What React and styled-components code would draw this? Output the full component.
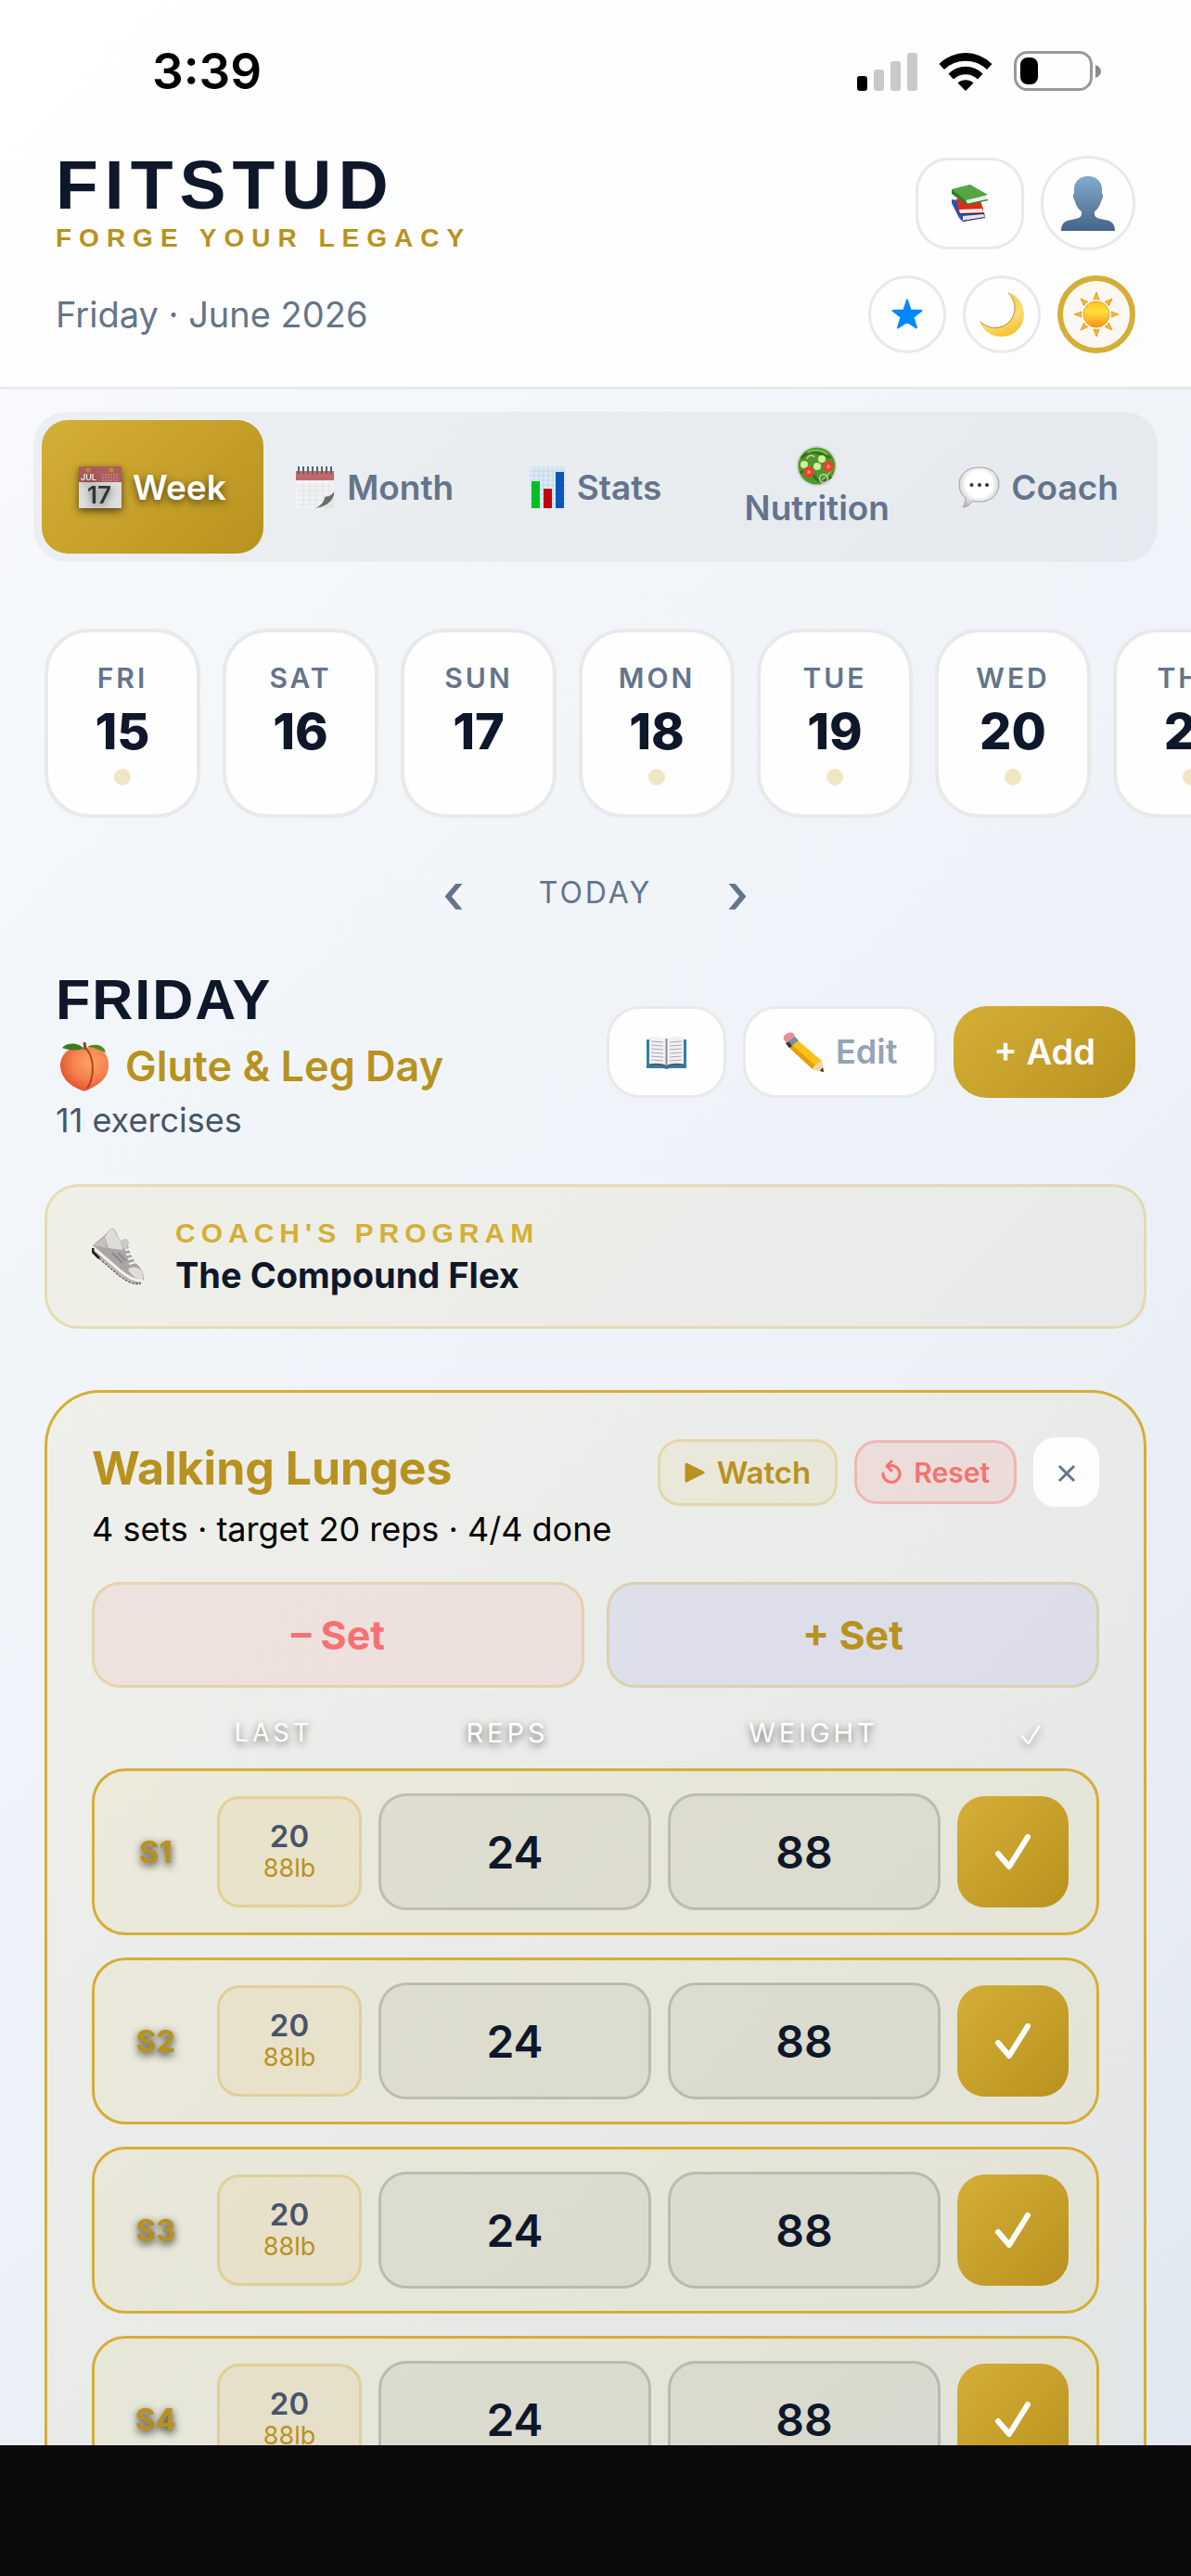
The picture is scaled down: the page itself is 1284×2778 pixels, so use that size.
import React, { useState } from "react";
import styled, { createGlobalStyle, css } from "styled-components";

const gold = "#d4af37";
const darkGold = "#b8921e";
const ink = "#0f172a";
const slate = "#64748b";
const line = "#e9e9e9";
const goldFill = `linear-gradient(135deg, ${gold}, ${darkGold})`;
const sans = `Inter, "Liberation Sans", sans-serif`;
const display = `"Liberation Sans", Arial, sans-serif`;

const GlobalStyle = createGlobalStyle`
  *, *::before, *::after { box-sizing: border-box; }
  body { margin: 0; background: #0b0b0b; }
  button, input { font: inherit; margin: 0; padding: 0; border: 0; color: inherit; background: none; }
  button { cursor: pointer; white-space: nowrap; }
  h1, h2, h3, p { margin: 0; }
  svg { display: block; flex: none; }
`;

/* ---------- shell ---------- */

const Screen = styled.div`
  display: flex;
  flex-direction: column;
  height: 100vh;
  overflow: hidden;
  font-family: ${sans};
  color: ${ink};
  background: linear-gradient(135deg, #fafbff 0%, #f3f7fa 25%, #eff3f9 50%, #e1e7f0 100%);
`;

const Content = styled.main`
  flex: 1;
  min-height: 0;
  overflow: hidden;
`;

const BottomBar = styled.footer`
  flex: none;
  height: 141px;
  background: #0b0b0b;
`;

const TopArea = styled.header`
  background: rgba(255, 255, 255, 0.82);
  border-bottom: 3px solid ${line};
`;

const StatusBar = styled.div`
  display: flex;
  justify-content: space-between;
  align-items: center;
  height: 141px;
  padding: 12px 96px 0 164px;
`;

const Clock = styled.time`
  font-size: 53px;
  font-weight: 600;
  line-height: 60px;
  color: #000;
`;

const StatusIcons = styled.div`
  display: flex;
  align-items: center;
  gap: 23px;
`;

const HeaderGrid = styled.div`
  display: flex;
  flex-direction: column;
  gap: 27px;
  padding: 27px 60px 36px;
`;

const HeaderRow = styled.div`
  display: flex;
  align-items: center;
  justify-content: space-between;
  height: ${(p) => p.$height}px;
`;

const Cluster = styled.div`
  display: flex;
  align-items: center;
  gap: 18px;
`;

const Brand = styled.div`
  display: flex;
  flex-direction: column;
  gap: 10px;
  font-family: ${display};
  font-weight: 700;
`;

const Logo = styled.h1`
  font-size: 75px;
  line-height: 66px;
  letter-spacing: 7px;
`;

const Tagline = styled.p`
  font-size: 28px;
  line-height: 30px;
  letter-spacing: 8px;
  color: ${darkGold};
`;

const DateText = styled.p`
  font-size: 38px;
  line-height: 48px;
  color: ${slate};
`;

const PillButton = styled.button`
  display: flex;
  align-items: center;
  justify-content: center;
  gap: 12px;
  height: 99px;
  padding: 0 ${(p) => p.$pad || 40}px;
  border: 3px solid ${line};
  border-radius: 36px;
  background: #fefefe;
  font-size: 36px;
  font-weight: 600;
  line-height: 45px;
  color: #94a3b8;
  ${(p) =>
    p.$primary &&
    css`
      border: 0;
      background: ${goldFill};
      font-size: 38px;
      color: #fff;
    `}
`;

const RoundButton = styled.button`
  display: flex;
  align-items: center;
  justify-content: center;
  width: ${(p) => p.$size}px;
  height: ${(p) => p.$size}px;
  border: 3px solid ${line};
  border-radius: 50%;
  background: #fefefe;
  ${(p) =>
    p.$active &&
    css`
      border: 6px solid ${gold};
      background: #fbf8f1;
    `}
`;

/* ---------- tabs ---------- */

const Tabs = styled.nav`
  display: flex;
  margin: 24px 36px 0;
  padding: 9px;
  border-radius: 36px;
  background: rgba(0, 0, 0, 0.04);
`;

const Tab = styled.button`
  flex: 1 1 0;
  min-width: 0;
  display: flex;
  flex-direction: ${(p) => (p.$stacked ? "column" : "row")};
  align-items: center;
  justify-content: center;
  gap: ${(p) => (p.$stacked ? 0 : 12)}px;
  min-height: 144px;
  border-radius: 28px;
  font-size: 37px;
  font-weight: 600;
  line-height: 45px;
  color: ${slate};
  ${(p) =>
    p.$active &&
    css`
      background: ${goldFill};
      color: #fff;
      text-shadow: 0 3px 8px rgba(0, 0, 0, 0.6);
      svg {
        filter: drop-shadow(0 3px 4px rgba(0, 0, 0, 0.6));
      }
    `}
`;

/* ---------- day strip ---------- */

const DayStrip = styled.div`
  display: flex;
  gap: 24px;
  margin-top: 72px;
  padding: 0 48px;
  overflow: hidden;
`;

const DayCard = styled.button`
  flex: none;
  display: flex;
  flex-direction: column;
  align-items: center;
  gap: 10px;
  width: 168px;
  padding: 31px 0;
  border: 4px solid ${line};
  border-radius: 48px;
  background: #fefefe;
`;

const DayName = styled.span`
  font-size: 30px;
  font-weight: 600;
  line-height: 36px;
  letter-spacing: 3px;
  color: ${slate};
`;

const DayNumber = styled.span`
  font-size: 54px;
  font-weight: 800;
  line-height: 60px;
`;

const DayDot = styled.span`
  width: 18px;
  height: 18px;
  border-radius: 50%;
  background: ${(p) => (p.$on ? "#f1e6c2" : "transparent")};
`;

const WeekNav = styled.div`
  display: flex;
  align-items: center;
  justify-content: center;
  gap: 56px;
  height: 102px;
  margin-top: 30px;
  color: ${slate};
`;

const NavArrow = styled.button`
  width: 72px;
  font-size: 60px;
  font-weight: 500;
  line-height: 72px;
`;

const TodayButton = styled.button`
  font-size: 32px;
  line-height: 48px;
  letter-spacing: 3px;
`;

/* ---------- day header ---------- */

const DayHeader = styled.section`
  display: flex;
  align-items: center;
  justify-content: space-between;
  margin-top: 27px;
  padding: 0 60px;
`;

const DayTitle = styled.h2`
  font-family: ${display};
  font-size: 61px;
  font-weight: 700;
  line-height: 75px;
  letter-spacing: 2px;
`;

const Focus = styled.p`
  display: flex;
  align-items: center;
  gap: 13px;
  margin-top: 4px;
  font-size: 45px;
  font-weight: 600;
  line-height: 60px;
  color: ${darkGold};
`;

const ExerciseCount = styled.p`
  margin-top: 8px;
  font-size: 36px;
  line-height: 40px;
  color: #475569;
`;

/* ---------- program card ---------- */

const ProgramCard = styled.section`
  display: flex;
  align-items: center;
  gap: 33px;
  height: 156px;
  margin: 49px 48px 0;
  padding: 0 48px;
  border: 3px solid rgba(212, 175, 55, 0.3);
  border-radius: 36px;
  background: linear-gradient(135deg, rgba(225, 205, 130, 0.14), rgba(212, 200, 150, 0.14));
`;

const ProgramLabel = styled.p`
  font-family: ${display};
  font-size: 30px;
  font-weight: 700;
  line-height: 40px;
  letter-spacing: 6px;
  color: ${gold};
`;

const ProgramName = styled.p`
  font-size: 38px;
  font-weight: 700;
  line-height: 50px;
`;

/* ---------- exercise card ---------- */

const ExerciseCard = styled.section`
  margin: 66px 48px 0;
  padding: 48px;
  border: 3px solid ${gold};
  border-radius: 60px;
  background: linear-gradient(135deg, rgba(226, 208, 140, 0.14), rgba(222, 214, 170, 0.16));
`;

const ExerciseTop = styled.div`
  display: flex;
  align-items: flex-start;
  justify-content: space-between;
  height: 126px;
`;

const ExerciseName = styled.h3`
  font-size: 50px;
  font-weight: 700;
  line-height: 66px;
  color: ${darkGold};
`;

const ExerciseMeta = styled.p`
  margin-top: 6px;
  font-size: 36px;
  line-height: 54px;
  white-space: nowrap;
  color: #000;
`;

const SmallButton = styled.button`
  display: flex;
  align-items: center;
  gap: 13px;
  height: ${(p) => p.$height}px;
  padding: 0 26px;
  border: 3px solid;
  border-radius: 24px;
  font-size: ${(p) => p.$text}px;
  font-weight: 600;
  ${(p) =>
    p.$tone === "red"
      ? css`
          border-color: rgba(248, 113, 113, 0.35);
          background: rgba(248, 113, 113, 0.12);
          color: #f87171;
        `
      : css`
          border-color: rgba(212, 175, 55, 0.3);
          background: rgba(212, 175, 55, 0.08);
          color: ${darkGold};
        `}
`;

const CloseButton = styled.button`
  display: flex;
  align-items: center;
  justify-content: center;
  width: 71px;
  height: 75px;
  border-radius: 24px;
  background: #fdfdfd;
  color: ${slate};
`;

const SetButtons = styled.div`
  display: grid;
  grid-template-columns: 1fr 1fr;
  gap: 24px;
  margin-top: 30px;
`;

const SetButton = styled.button`
  height: 114px;
  border: 3px solid rgba(212, 175, 55, 0.3);
  border-radius: 30px;
  background: ${(p) => (p.$tone === "red" ? "rgba(248, 113, 113, 0.1)" : "rgba(99, 102, 241, 0.09)")};
  font-size: 43px;
  font-weight: 700;
  color: ${(p) => (p.$tone === "red" ? "#f87171" : darkGold)};
`;

const ColumnHeads = styled.div`
  display: grid;
  grid-template-columns: 90px 156px 1fr 1fr 120px;
  gap: 18px;
  margin: 30px 0 19px;
  padding: 0 14px 0 10px;
  font-size: 29px;
  line-height: 38px;
  letter-spacing: 4px;
  text-align: center;
  color: #fff;
  text-shadow: 0 3px 9px rgba(0, 0, 0, 0.6);
  svg {
    margin: 9px auto 0;
    filter: drop-shadow(0 3px 4px rgba(0, 0, 0, 0.4));
  }
`;

const HeadSmall = styled.span`
  font-size: 27px;
`;

const SetList = styled.ul`
  display: flex;
  flex-direction: column;
  gap: 24px;
  margin: 0;
  padding: 0;
  list-style: none;
`;

const SetRow = styled.li`
  display: grid;
  grid-template-columns: 84px 156px 1fr 1fr 120px;
  align-items: center;
  gap: 18px;
  height: 180px;
  padding: 0 30px;
  border: 3px solid ${gold};
  border-radius: 36px;
  background: rgba(212, 195, 55, 0.08);
`;

const SetLabel = styled.span`
  padding-right: 12px;
  font-size: 33px;
  font-weight: 700;
  line-height: 40px;
  text-align: center;
  color: ${darkGold};
  text-shadow: 0 3px 9px rgba(0, 0, 0, 0.8);
`;

const LastBox = styled.div`
  display: flex;
  flex-direction: column;
  align-items: center;
  justify-content: center;
  height: 120px;
  border: 3px solid rgba(212, 175, 55, 0.35);
  border-radius: 24px;
  background: rgba(232, 190, 110, 0.14);
`;

const LastReps = styled.strong`
  font-size: 33px;
  font-weight: 600;
  line-height: 36px;
  color: #475569;
`;

const LastWeight = styled.span`
  font-size: 27px;
  line-height: 34px;
  color: ${darkGold};
`;

const NumberInput = styled.input`
  width: 100%;
  height: 126px;
  border: 3px solid rgba(0, 0, 0, 0.15);
  border-radius: 30px;
  background: rgba(0, 0, 0, 0.045);
  font-size: 48px;
  font-weight: 600;
  text-align: center;
  color: ${ink};
`;

const DoneButton = styled.button`
  display: flex;
  align-items: center;
  justify-content: center;
  height: 120px;
  border-radius: 30px;
  background: ${(p) => (p.$done ? goldFill : "rgba(0, 0, 0, 0.06)")};
`;

/* ---------- drawings ---------- */

const SignalIcon = () => (
  <svg width="65" height="42" viewBox="0 0 65 42">
    <rect x="0" y="26" width="11" height="16" rx="3" fill="#000" />
    <rect x="18" y="19" width="11" height="23" rx="3" fill="#c9c9c9" />
    <rect x="36" y="10" width="11" height="32" rx="3" fill="#c9c9c9" />
    <rect x="54" y="1" width="11" height="41" rx="3" fill="#c9c9c9" />
  </svg>
);

const WifiIcon = () => (
  <svg width="58" height="42" viewBox="0 0 58 42">
    <path d="M0.500 13A40 40 0 0 1 57.500 13L52 19A33 33 0 0 0 6 19Z" fill="#000" />
    <path d="M10.500 23.500A26 26 0 0 1 47.500 23.500L42 29.500A19 19 0 0 0 16 29.500Z" fill="#000" />
    <path d="M20.500 33.500A13 13 0 0 1 37.500 33.500L29 42Z" fill="#000" />
  </svg>
);

const BatteryIcon = () => (
  <svg width="95" height="44" viewBox="0 0 95 44">
    <rect x="1.500" y="1.500" width="82" height="40" rx="13" fill="none" stroke="#999" strokeWidth="3" />
    <rect x="7" y="7" width="19" height="29" rx="8" fill="#000" />
    <path d="M88 15C92 16.500 94 19 94 22S92 27.500 88 29Z" fill="#8b8b8b" />
  </svg>
);

const BooksIcon = () => (
  <svg width="39" height="40" viewBox="0 0 39 40">
    <path d="M0 16L6 17L9 29L35 30L36 35L12 40L8 36L0 20Z" fill="#2c4fae" />
    <path d="M12 34L34 32L36 35L12 39Z" fill="#e4e4ea" />
    <path d="M5 15L31 18L34 26L33 31L8 31Z" fill="#e02a1a" />
    <path d="M8 27L33 26V30L9 31Z" fill="#ecebea" />
    <path d="M0 5L20 0L39 11L15 18Z" fill="#55a544" />
    <path d="M15 17L37 12V17L17 21Z" fill="#e9eceb" />
    <path d="M0 5L15 17L17 21L15 21L0 10Z" fill="#2f7d2a" />
    <path d="M16 21.500L39 16.500" stroke="#2f8d2a" strokeWidth="1.500" />
    <path d="M8 31.500H34M12 39.500L36 35.500" stroke="#3a2a4a" strokeWidth="1" />
  </svg>
);

const PersonIcon = () => (
  <svg width="60" height="60" viewBox="0 0 60 60">
    <defs>
      <linearGradient id="person" x1="0" y1="0" x2="0" y2="1">
        <stop offset="0" stopColor="#82abcd" />
        <stop offset="1" stopColor="#446489" />
      </linearGradient>
    </defs>
    <path
      fill="url(#person)"
      d="M30 1C39 1 45 7 45 15V20C47 20 46 25 44.500 27C43 33 40 37 37 39V42C37 46 43 47 48 48C56 49 59 53 59 60H1C1 53 4 49 12 48C17 47 23 46 23 42V39C20 37 17 33 15.500 27C14 25 13 20 15 20V15C15 7 21 1 30 1Z"
    />
  </svg>
);

const StarIcon = () => (
  <svg width="36" height="36" viewBox="0 0 36 36">
    <path
      d="M18 2.500L21.500 13.500L33.500 14L24.500 21L28 32.500L18 26L8 32.500L11.500 21L2.500 14L14.500 13.500Z"
      fill="#0088ff"
      stroke="#0088ff"
      strokeWidth="2"
      strokeLinejoin="round"
    />
  </svg>
);

const MoonIcon = () => (
  <svg width="48" height="48" viewBox="0 0 48 48">
    <defs>
      <linearGradient id="moon" x1="0.3" y1="0" x2="0.7" y2="1">
        <stop offset="0" stopColor="#f3cb4a" />
        <stop offset="0.6" stopColor="#f9dd74" />
        <stop offset="1" stopColor="#f6be24" />
      </linearGradient>
    </defs>
    <path d="M31 0C42 4 48 14 48 24A24 24 0 0 1 24 48C12 48 3 41 0 31C5 36 11 38.500 17 38.500C29 38 38 29 38 17C38 10 35 4 31 0Z" fill="url(#moon)" />
    <path d="M31 1C35 5 38 10 38 17C38 29 29 38 17 38.500C11 38.500 5 36 1 32" fill="none" stroke="#b98a3a" strokeWidth="1" />
  </svg>
);

const SunIcon = () => (
  <svg width="48" height="48" viewBox="0 0 48 48">
    <defs>
      <linearGradient id="sun" x1="0" y1="0" x2="0" y2="1">
        <stop offset="0" stopColor="#fbc21f" />
        <stop offset="0.4" stopColor="#ffe03c" />
        <stop offset="1" stopColor="#f3920f" />
      </linearGradient>
    </defs>
    {[0, 45, 90, 135, 180, 225, 270, 315].map((a) => (
      <path key={a} d="M24 0L27 8Q24 6.500 21 8Z" fill="#fbb823" stroke="#e08f2c" strokeWidth="0.8" transform={`rotate(${a} 24 24)`} />
    ))}
    <circle cx="24" cy="24" r="14" fill="url(#sun)" stroke="#f0a22a" strokeWidth="1" />
  </svg>
);

const CalendarIcon = () => (
  <svg width="46" height="45" viewBox="0 0 46 45">
    <rect width="46" height="45" rx="1" fill="#dedede" />
    <rect width="46" height="17" fill="#ad5c5f" />
    <circle cx="10" cy="4" r="2.500" fill="#b7902c" />
    <circle cx="35" cy="4" r="2.500" fill="#b7902c" />
    <text x="2" y="15" fontFamily="Inter, sans-serif" fontSize="9" fill="#eee">JUL</text>
    <path d="M25 9H43M25 12H43M25 15H43" stroke="#cf9a9c" strokeWidth="1" strokeDasharray="2 1" />
    <text x="22" y="40" textAnchor="middle" fontFamily="Inter, sans-serif" fontSize="26" fill="#333">17</text>
  </svg>
);

const NotepadIcon = () => (
  <svg width="45" height="45" viewBox="0 0 45 45">
    <path d="M2 9H43V45H2Z" fill="#f1f2f3" />
    <rect x="2" y="5" width="41" height="10" fill="#c0686c" />
    <path d="M4 21H41M4 26H41M4 31H38M4 36H34M4 41H26M10 16V44M17 16V44M24 16V42M31 16V40M38 16V33" stroke="#e1e3e6" strokeWidth="1" />
    <path d="M5 0V8M10 0V8M15 0V8M20 0V8M25 0V8M30 0V8M35 0V8M40 0V8" stroke="#56656a" strokeWidth="2" />
    <path d="M43 27C40 33 35 32 33 33C33 38 28 44 21 45C33 44 40 40 43 31Z" fill="#6c6c6c" />
    <path d="M43 32V45H25C34 43 40 39 43 32Z" fill="#e4e5e5" />
  </svg>
);

const ChartIcon = () => (
  <svg width="39" height="45" viewBox="0 0 39 45">
    <rect width="39" height="45" fill="#dcebf7" />
    <path d="M0 5H39M0 10H39M0 15H39M0 20H39M0 25H39M0 30H39M0 35H39M0 40H39M5 0V45M10 0V45M15 0V45M20 0V45M25 0V45M30 0V45M35 0V45" stroke="#c3d6e6" strokeWidth="1" />
    <rect x="2" y="16" width="9" height="29" fill="#06bf23" />
    <rect x="15" y="24" width="9" height="21" fill="#c00510" />
    <rect x="28" y="6" width="9" height="39" fill="#0a56bd" />
  </svg>
);

const SaladIcon = () => (
  <svg width="45" height="45" viewBox="0 0 45 45">
    <circle cx="22.500" cy="22.500" r="22" fill="#d4d9d7" />
    <circle cx="22.500" cy="22.500" r="20" fill="#4c9a2a" />
    <path d="M6 14Q14 6 22 8T38 14M5 30Q14 24 20 34T38 34" fill="none" stroke="#2f741b" strokeWidth="3" />
    <path d="M12 8Q24 2 34 10M28 38Q36 32 40 24" fill="none" stroke="#7cc444" strokeWidth="2" />
    <circle cx="9" cy="21" r="4" fill="#d5ee9c" />
    <circle cx="28" cy="15" r="4" fill="#d5ee9c" />
    <circle cx="23" cy="23" r="4" fill="#d5ee9c" />
    <circle cx="14" cy="29" r="6" fill="#e5452f" />
    <circle cx="35" cy="23" r="6" fill="#e5452f" />
    <circle cx="14" cy="29" r="2" fill="#f58a72" />
    <circle cx="35" cy="23" r="2" fill="#f58a72" />
    <circle cx="30" cy="36" r="4.500" fill="none" stroke="#e3bfd0" strokeWidth="1.500" />
    <path d="M12 15A4.500 4.500 0 0 1 20 13" fill="none" stroke="#e3bfd0" strokeWidth="1.500" />
  </svg>
);

const SpeechIcon = () => (
  <svg width="45" height="45" viewBox="0 0 45 45">
    <defs>
      <radialGradient id="bubble" cx="0.5" cy="0.42" r="0.6">
        <stop offset="0.55" stopColor="#fff" />
        <stop offset="1" stopColor="#b9b9b9" />
      </radialGradient>
    </defs>
    <path
      d="M23 1C36 1 44 8 44 19S36 38 23 38C20 38 18 38 16 37C13 41 9 44 5 44C7 41 8 37 8 34C3 31 1 25 1 19C1 8 10 1 23 1Z"
      fill="url(#bubble)"
      stroke="#a3a3a3"
      strokeWidth="1"
    />
    <circle cx="14.500" cy="20" r="2" fill="#333" />
    <circle cx="23" cy="20" r="2" fill="#333" />
    <circle cx="31" cy="20" r="2" fill="#333" />
  </svg>
);

const PeachIcon = () => (
  <svg width="62" height="54" viewBox="0 0 62 54">
    <defs>
      <radialGradient id="peach" cx="0.62" cy="0.35" r="0.75">
        <stop offset="0" stopColor="#fda468" />
        <stop offset="0.5" stopColor="#f5824e" />
        <stop offset="1" stopColor="#dc4426" />
      </radialGradient>
    </defs>
    <path d="M32 7C47 3 58 13 57 27C56 42 44 48 33 53C30 54 28 53 26 52C14 47 6 39 5 27C5 13 17 3 32 7Z" fill="url(#peach)" />
    <path d="M33 8C42 18 42 38 34 51" fill="none" stroke="#b9401c" strokeWidth="2" />
    <path d="M30 8C24 10 14 10 7 7C12 1 25 1 30 8Z" fill="#3f7a1c" />
    <path d="M34 6C41 2 52 3 54 12C48 10 41 6 34 6Z" fill="#4c8a22" />
    <path d="M31 1L32 9" stroke="#7b4a2b" strokeWidth="3" />
  </svg>
);

const OpenBookIcon = () => (
  <svg width="43" height="36" viewBox="0 0 43 36">
    <path d="M0 4H43V35H25L21.500 36L18 35H0Z" fill="#2f7fa8" />
    <path d="M3 1Q14 0 21 4V33Q14 29 3 31Z" fill="#f1f1f4" />
    <path d="M40 1Q29 0 22 4V33Q29 29 40 31Z" fill="#f1f1f4" />
    <path d="M3 31.500Q14 29.500 21.500 33Q29 29.500 40 31.500" fill="none" stroke="#55585c" strokeWidth="2" />
    <path d="M21.500 3V33" stroke="#8a8c90" strokeWidth="2" />
    <path d="M5 6L18 7M5 10L18 11M5 14L18 15M5 18L18 19M5 22L18 23M5 26L18 27M25 7L38 6M25 11L38 10M25 15L38 14M25 19L38 18M25 23L38 22M25 27L38 26" stroke="#a9aab3" strokeWidth="1" />
  </svg>
);

const PencilIcon = () => (
  <svg width="45" height="44" viewBox="0 0 45 44">
    <path d="M6 16L15 8L42 31L44 43L32 40Z" fill="#fdc21a" />
    <path d="M6 16L9 13L36 37L32 40Z" fill="#e99c0c" />
    <path d="M32 40Q32 37 35 36Q36 33 39 33Q40 31 42 31L44 43Z" fill="#f4d6a4" />
    <path d="M40 42L43 38L44 43Z" fill="#2c2c2c" />
    <path d="M3 12L12 4L17 9L7 17Z" fill="#7390a8" />
    <path d="M3 12L6 10L10 15L7 17Z" fill="#333" />
    <path d="M1 8C-1 3 7 -1 11 1L13 4L4 12Z" fill="#ef8d90" />
  </svg>
);

const ShoeIcon = () => (
  <svg width="57" height="62" viewBox="0 0 57 62">
    <path d="M1 20C4 15 10 12 14 8L20 1C23 0 25 2 26 5L31 14L36 12C39 12 40 15 39 19L41 26L47 38C52 42 56 48 56 54C56 58 53 60 48 60C42 58 36 55 30 50L4 28Z" fill="#aaa6a4" />
    <path d="M14 10L20 1C24 1 25 4 26 7L31 14L33 24L18 22Z" fill="#dddcdb" />
    <path d="M14 10L16 22L2 19C5 15 10 13 14 10Z" fill="#c3c0be" />
    <path d="M31 14L36 12C39 12 40 15 39 19L37 23L32 22Z" fill="#cbc9c8" />
    <path d="M39 45C43 41 49 42 53 46C56 50 56 54 54 56C49 56 43 52 39 45Z" fill="#dedddb" />
    <path d="M36 24L42 23M37 29L44 28M39 34L46 32M40 39L48 37" stroke="#f6f6f6" strokeWidth="2" />
    <path d="M22 27L33 38M28 27L37 36" stroke="#8b8886" strokeWidth="2" />
    <path d="M1 21L30 46C37 52 46 58 55 57" fill="none" stroke="#f0f0f0" strokeWidth="3" />
    <path d="M1 22V26L8 33" fill="none" stroke="#222" strokeWidth="3" />
    <path d="M8 33L30 52C38 58 46 62 53 60" fill="none" stroke="#5a5a5a" strokeWidth="1.500" strokeDasharray="3 1" />
  </svg>
);

const PlayIcon = () => (
  <svg width="22" height="22" viewBox="0 0 22 22">
    <path d="M2 2L20 11L2 20Z" fill="currentColor" stroke="currentColor" strokeWidth="3" strokeLinejoin="round" />
  </svg>
);

const ResetIcon = () => (
  <svg width="22" height="28" viewBox="0 0 22 28">
    <path d="M2 15A9 9 0 1 0 8 7" fill="none" stroke="currentColor" strokeWidth="3" strokeLinecap="round" />
    <path d="M11 2L6 7L11 12" fill="none" stroke="currentColor" strokeWidth="3" strokeLinecap="round" strokeLinejoin="round" />
  </svg>
);

const CloseIcon = () => (
  <svg width="20" height="24" viewBox="0 0 20 24">
    <path d="M2 5L18 21M18 5L2 21" stroke="currentColor" strokeWidth="3" />
  </svg>
);

const CheckIcon = ({ size = 42, weight = 6 }) => (
  <svg width={size} height={size} viewBox="0 0 42 42">
    <path d="M5 23L17 37L37 5" fill="none" stroke="#fff" strokeWidth={weight} strokeLinecap="round" strokeLinejoin="round" />
  </svg>
);

/* ---------- page ---------- */

const tabs = [
  { label: "Week", Icon: CalendarIcon },
  { label: "Month", Icon: NotepadIcon },
  { label: "Stats", Icon: ChartIcon },
  { label: "Nutrition", Icon: SaladIcon, stacked: true },
  { label: "Coach", Icon: SpeechIcon },
];

const days = [
  ["FRI", 15, true],
  ["SAT", 16, false],
  ["SUN", 17, false],
  ["MON", 18, true],
  ["TUE", 19, true],
  ["WED", 20, true],
  ["THU", 21, true],
];

const initialSets = [1, 2, 3, 4].map((n) => ({ n, reps: "24", weight: "88", done: true }));

export default function App() {
  const [tab, setTab] = useState("Week");
  const [sets, setSets] = useState(initialSets);
  const update = (n, patch) => setSets((all) => all.map((s) => (s.n === n ? { ...s, ...patch } : s)));

  return (
    <Screen>
      <GlobalStyle />
      <Content>
        <TopArea>
          <StatusBar>
            <Clock>3:39</Clock>
            <StatusIcons>
              <SignalIcon />
              <WifiIcon />
              <BatteryIcon />
            </StatusIcons>
          </StatusBar>
          <HeaderGrid>
            <HeaderRow $height={102}>
              <Brand>
                <Logo>FITSTUD</Logo>
                <Tagline>FORGE YOUR LEGACY</Tagline>
              </Brand>
              <Cluster>
                <PillButton $pad={36} aria-label="Library">
                  <BooksIcon />
                </PillButton>
                <RoundButton $size={102} aria-label="Profile">
                  <PersonIcon />
                </RoundButton>
              </Cluster>
            </HeaderRow>
            <HeaderRow $height={84}>
              <DateText>Friday · June 2026</DateText>
              <Cluster>
                <RoundButton $size={84} aria-label="Accent theme">
                  <StarIcon />
                </RoundButton>
                <RoundButton $size={84} aria-label="Dark theme">
                  <MoonIcon />
                </RoundButton>
                <RoundButton $size={84} $active aria-label="Light theme">
                  <SunIcon />
                </RoundButton>
              </Cluster>
            </HeaderRow>
          </HeaderGrid>
        </TopArea>

        <Tabs>
          {tabs.map(({ label, Icon, stacked }) => (
            <Tab key={label} $active={tab === label} $stacked={stacked} onClick={() => setTab(label)}>
              <Icon />
              <span>{label}</span>
            </Tab>
          ))}
        </Tabs>

        <DayStrip>
          {days.map(([name, number, planned]) => (
            <DayCard key={number}>
              <DayName>{name}</DayName>
              <DayNumber>{number}</DayNumber>
              <DayDot $on={planned} />
            </DayCard>
          ))}
        </DayStrip>

        <WeekNav>
          <NavArrow aria-label="Previous week">‹</NavArrow>
          <TodayButton>TODAY</TodayButton>
          <NavArrow aria-label="Next week">›</NavArrow>
        </WeekNav>

        <DayHeader>
          <div>
            <DayTitle>FRIDAY</DayTitle>
            <Focus>
              <PeachIcon />
              <span>Glute &amp; Leg Day</span>
            </Focus>
            <ExerciseCount>11 exercises</ExerciseCount>
          </div>
          <Cluster>
            <PillButton aria-label="Guide">
              <OpenBookIcon />
            </PillButton>
            <PillButton>
              <PencilIcon />
              <span>Edit</span>
            </PillButton>
            <PillButton $primary $pad={43}>+ Add</PillButton>
          </Cluster>
        </DayHeader>

        <ProgramCard>
          <ShoeIcon />
          <div>
            <ProgramLabel>COACH'S PROGRAM</ProgramLabel>
            <ProgramName>The Compound Flex</ProgramName>
          </div>
        </ProgramCard>

        <ExerciseCard>
          <ExerciseTop>
            <div>
              <ExerciseName>Walking Lunges</ExerciseName>
              <ExerciseMeta>4 sets · target 20 reps · 4/4 done</ExerciseMeta>
            </div>
            <Cluster>
              <SmallButton $height={72} $text={33}>
                <PlayIcon />
                <span>Watch</span>
              </SmallButton>
              <SmallButton $height={69} $text={30} $tone="red">
                <ResetIcon />
                <span>Reset</span>
              </SmallButton>
              <CloseButton aria-label="Remove exercise">
                <CloseIcon />
              </CloseButton>
            </Cluster>
          </ExerciseTop>

          <SetButtons>
            <SetButton $tone="red">– Set</SetButton>
            <SetButton>+ Set</SetButton>
          </SetButtons>

          <ColumnHeads>
            <span />
            <HeadSmall>LAST</HeadSmall>
            <span>REPS</span>
            <span>WEIGHT</span>
            <CheckIcon size={24} weight={4} />
          </ColumnHeads>

          <SetList>
            {sets.map((s) => (
              <SetRow key={s.n}>
                <SetLabel>S{s.n}</SetLabel>
                <LastBox>
                  <LastReps>20</LastReps>
                  <LastWeight>88lb</LastWeight>
                </LastBox>
                <NumberInput
                  aria-label={`Set ${s.n} reps`}
                  inputMode="numeric"
                  value={s.reps}
                  onChange={(e) => update(s.n, { reps: e.target.value })}
                />
                <NumberInput
                  aria-label={`Set ${s.n} weight`}
                  inputMode="numeric"
                  value={s.weight}
                  onChange={(e) => update(s.n, { weight: e.target.value })}
                />
                <DoneButton
                  $done={s.done}
                  aria-pressed={s.done}
                  aria-label={`Set ${s.n} done`}
                  onClick={() => update(s.n, { done: !s.done })}
                >
                  <CheckIcon />
                </DoneButton>
              </SetRow>
            ))}
          </SetList>
        </ExerciseCard>
      </Content>
      <BottomBar />
    </Screen>
  );
}
